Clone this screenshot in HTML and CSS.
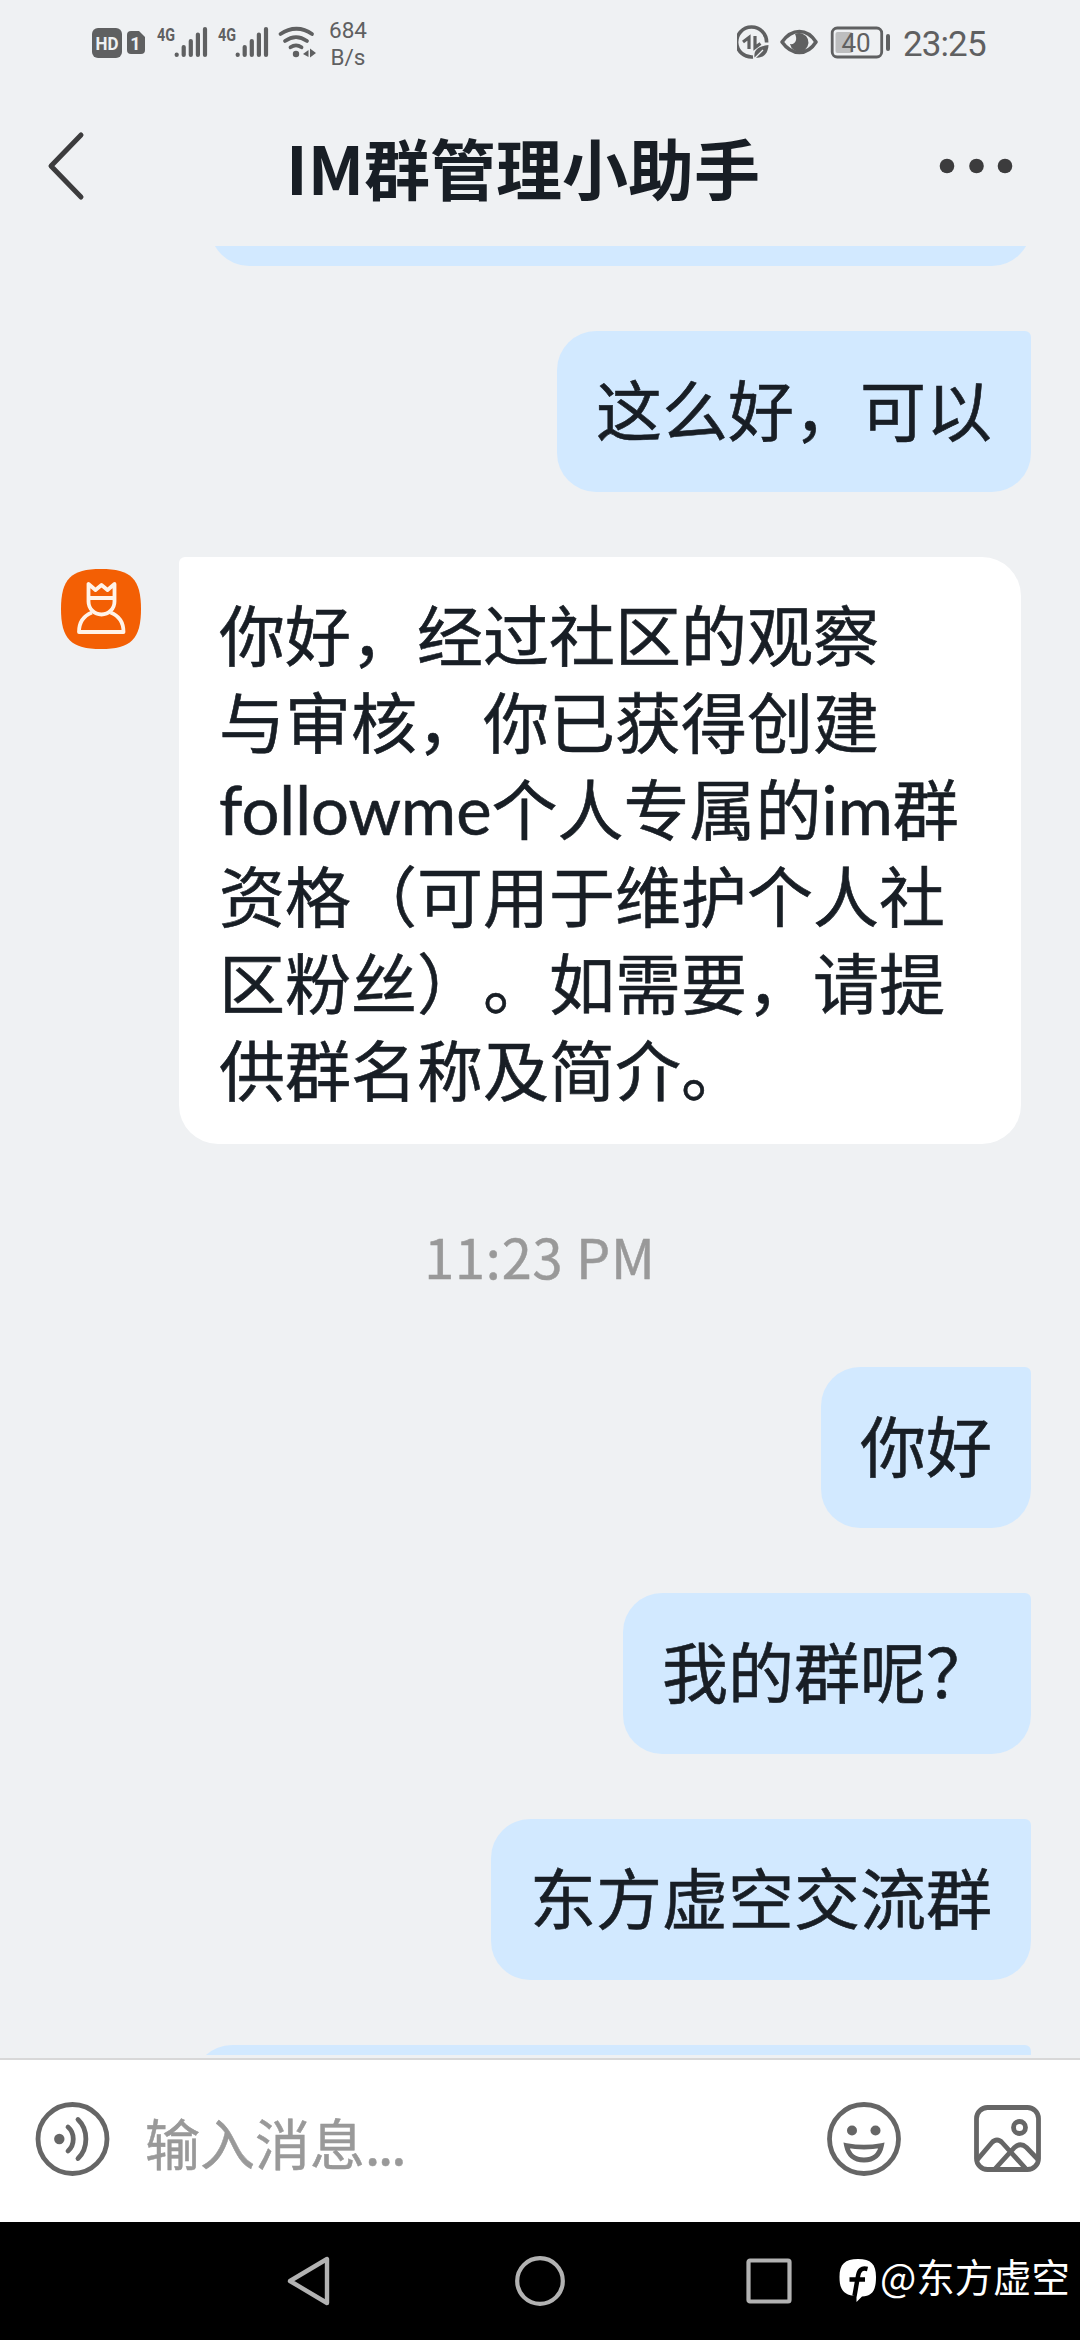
FILE: index.html
```html
<!DOCTYPE html>
<html lang="zh-CN">
<head>
<meta charset="utf-8">
<title>IM群管理小助手</title>
<link rel="stylesheet" href="styles.css">
</head>
<body>
<div class="screen">
  <div class="status">
    <svg class="status-left" width="230" height="90" viewBox="0 0 230 90">
      <rect x="2" y="28" width="30" height="30" rx="6" fill="#5f6061"/>
      <text x="17" y="50" class="hd" text-anchor="middle" textLength="23" lengthAdjust="spacingAndGlyphs">HD</text>
      <path d="M41 31h8l6 6v13a4 4 0 0 1-4 4H41a4 4 0 0 1-4-4V35a4 4 0 0 1 4-4z" fill="#5f6061"/>
      <text x="45.500" y="50" class="sim" text-anchor="middle">1</text>
      <g id="signal">
        <text x="67" y="40.500" class="net" textLength="18" lengthAdjust="spacingAndGlyphs">4G</text>
        <g stroke="#5f6061" stroke-width="4.200" stroke-linecap="round"><path d="M86.700 54.500v.5M93.700 47v8M100.800 41v14M107.900 34.500V55M115 29v26"/></g>
      </g>
      <use href="#signal" x="61"/>
      <g fill="none" stroke="#5f6061" stroke-width="3.800" stroke-linecap="round">
        <path d="M190.500 34c10-7 22-7 31.500 0M195 41c7-5 15-5 22 0M200.500 47.300c3.500-2.500 7.500-2.500 11 0"/>
      </g>
      <circle cx="206" cy="54" r="3.200" fill="#5f6061"/>
      <path d="M213 54l5.500-4v7zM226 53l-6-4.500v9z" fill="#5f6061"/>
    </svg>
    <div class="speed"><span>684</span><span>B/s</span></div>
    <svg class="status-right" width="160" height="90" viewBox="0 0 160 90">
      <path d="M16 57A15 15 0 1 1 29.600 42.500" fill="none" stroke="#5f6061" stroke-width="3.600"/>
      <path d="M6 42l6-4.500v11.500M18 36v11.500l5.500-4" fill="none" stroke="#5f6061" stroke-width="3.200"/>
      <path d="M17.500 57.500c-1-7 3-11 14-12.500C31 54 26 59 17.500 57.500z" fill="#5f6061"/>
      <path d="M17 59l9-9" stroke="#eff1f3" stroke-width="1.200"/>
      <path d="M45 42c10-14 25-14 34 0c-9 14-24 14-34 0z" fill="none" stroke="#5f6061" stroke-width="3.600" stroke-linejoin="round"/>
      <path d="M58 34a9.300 9.300 0 1 1-5 10c5 1 8-4 5-10z" fill="#5f6061"/>
      <rect x="98.500" y="32" width="17" height="21" rx="2" fill="#bdbebf"/>
      <rect x="95.200" y="28" width="49.500" height="29" rx="5" fill="none" stroke="#5f6061" stroke-width="2.800"/>
      <path d="M151 36v13" stroke="#5f6061" stroke-width="4" stroke-linecap="round"/>
      <text x="119" y="51.500" class="battery" text-anchor="middle">40</text>
    </svg>
    <div class="clock">23:25</div>
  </div>

  <div class="header">
    <svg width="40" height="72" viewBox="0 0 40 72"><path d="M35 5L5 36l30 31" fill="none" stroke="#3c3c3d" stroke-width="5" stroke-linecap="round" stroke-linejoin="round"/></svg>
    <div class="title">IM群管理小助手</div>
    <svg width="76" height="16" viewBox="0 0 76 16" fill="#3c3c3d"><circle cx="9" cy="8" r="7.300"/><circle cx="38.500" cy="8" r="7.300"/><circle cx="67" cy="8" r="7.300"/></svg>
  </div>

  <div class="chat">
    <div class="bubble mine clipped-top"></div>
    <div class="bubble mine">这么好，可以</div>
    <div class="incoming">
      <svg class="avatar" width="80" height="80" viewBox="0 0 80 80">
        <path d="M40 0C70 0 80 10 80 40S70 80 40 80S0 70 0 40S10 0 40 0z" fill="#f35f04"/>
        <g fill="none" stroke="#fff3e8" stroke-width="3.800" stroke-linejoin="round">
          <path d="M27.500 15v17.500a13 13 0 0 0 26 0V15l-7 6L40.500 16l-6 5zM27.500 29h26"/>
          <path d="M31 43.500C22 47 18 54 18 63h44.500c0-9-4-16-13-19.500"/>
        </g>
      </svg>
      <div class="bubble theirs">你好，经过社区的观察<br>与审核，你已获得创建<br><span class="latin">followme</span>个人专属的<span class="latin">im</span>群<br>资格（可用于维护个人社<br>区粉丝）。如需要，请提<br>供群名称及简介。</div>
    </div>
    <div class="time">11:23 PM</div>
    <div class="bubble mine">你好</div>
    <div class="bubble mine">我的群呢？</div>
    <div class="bubble mine">东方虚空交流群</div>
    <div class="bubble mine clipped-bottom"></div>
  </div>

  <div class="composer">
    <svg width="76" height="76" viewBox="0 0 76 76" fill="none" stroke="#666" stroke-width="4.800" stroke-linecap="round">
      <circle cx="38.500" cy="38" r="34.500"/><circle cx="25.300" cy="38" r="5.200" fill="#666" stroke="none"/>
      <path d="M34 26c7 6 7 18 0 24M44 18.500c10.500 10 10.500 29 0 39"/>
    </svg>
    <div class="placeholder">输入消息<span class="dots">...</span></div>
    <svg class="smile" width="76" height="76" viewBox="0 0 76 76" fill="none" stroke="#666" stroke-width="4.800">
      <circle cx="38" cy="38" r="34.500"/><circle cx="26" cy="29.500" r="5" fill="#666" stroke="none"/><circle cx="49.500" cy="29.500" r="5" fill="#666" stroke="none"/>
      <path d="M20.500 44.500c11 2 24 2 35 0C53.500 54.500 47 59 38 59s-15.500-4.500-17.500-14.500z"/>
    </svg>
    <svg width="70" height="70" viewBox="0 0 70 70" fill="none" stroke="#666" stroke-width="4.800">
      <rect x="3.500" y="3.500" width="62" height="62" rx="11"/>
      <circle cx="46.500" cy="23.500" r="6"/>
      <path d="M4.500 55.500L18.500 39q5.500-6 11 0L54 66M21 66L41.500 43.500q6-5.500 12 0L65 55.500"/>
    </svg>
  </div>

  <div class="nav">
    <svg width="46" height="54" viewBox="0 0 46 54"><path d="M4 27L41 5v44z" fill="none" stroke="#b2b2b2" stroke-width="4.400" stroke-linejoin="round"/></svg>
    <svg class="home" width="52" height="52" viewBox="0 0 52 52"><circle cx="26" cy="26" r="22.800" fill="none" stroke="#b2b2b2" stroke-width="4.200"/></svg>
    <svg class="recent" width="48" height="48" viewBox="0 0 48 48"><rect x="3.500" y="3.500" width="41" height="41" rx="1.500" fill="none" stroke="#b2b2b2" stroke-width="4.200"/></svg>
    <svg class="logo" width="38" height="44" viewBox="0 0 38 44">
      <path d="M19 0C32 0 37 5 37 18c0 14-4 19-14 19.500L17.500 43V37C5 36.500.5 31 .5 18S6 0 19 0z" fill="#fff"/>
      <path d="M28.500 10c-6-1.500-8.500 1-9.500 7L15.500 37M10.500 20.500h15.500" fill="none" stroke="#000" stroke-width="4.500"/>
    </svg>
    <div class="mark">@东方虚空</div>
  </div>
</div>
</body>
</html>
```
FILE: styles.css
```css
* { box-sizing: border-box; }
body {
  margin: 0;
  background: #eff1f3;
  font-family: "Noto Sans CJK SC", sans-serif;
  color: #181e25;
  text-spacing-trim: space-all;
}
svg { display: block; flex: none; }
.screen {
  width: 1080px;
  height: 2340px;
  display: flex;
  flex-direction: column;
  overflow: hidden;
}
.status {
  flex: none;
  display: flex;
  height: 90px;
  padding-left: 90px;
  color: #5f6061;
  font-family: Roboto, sans-serif;
}
.hd { font: 700 18px Roboto, sans-serif; fill: #eff1f3; }
.sim { font: 700 18px Roboto, sans-serif; fill: #eff1f3; }
.net { font: 700 19px Roboto, sans-serif; fill: #5f6061; }
.battery { font: 400 26px Roboto, sans-serif; fill: #5f6061; }
.speed {
  display: flex;
  flex-direction: column;
  width: 56px;
  padding-top: 17px;
  text-align: center;
  font-size: 22.5px;
  line-height: 27px;
}
.status-right { margin-left: 361px; }
.clock {
  margin-left: 6px;
  font-size: 35px;
  line-height: 89px;
  letter-spacing: -0.9px;
}
.header {
  flex: none;
  display: flex;
  align-items: center;
  height: 156px;
  padding: 0 66px 4px 46px;
}
.title {
  flex: 1;
  padding-left: 22px;
  text-align: center;
  font-size: 66px;
  line-height: 90px;
  font-weight: 700;
}
.header svg:first-child { margin-right: -2px; }
.header svg:last-child { margin-left: -2px; }
.chat {
  flex: none;
  display: flex;
  flex-direction: column;
  align-items: flex-end;
  gap: 65px;
  height: 1809px;
  margin-bottom: 3px;
  padding-right: 49px;
  overflow: hidden;
}
.bubble {
  flex: none;
  padding: 33px 39px 41px;
  border-radius: 39px;
  font-size: 66px;
  line-height: 87px;
  white-space: nowrap;
  -webkit-text-stroke: 0.6px currentColor;
}
.mine {
  background: #d2e9ff;
  border-top-right-radius: 6px;
}
.clipped-top {
  width: 821px;
  height: 161px;
  margin-top: -141px;
}
.clipped-bottom {
  width: 838px;
  height: 161px;
}
.incoming {
  flex: none;
  display: flex;
  width: 100%;
  padding-left: 61px;
  gap: 38px;
}
.avatar { margin-top: 12px; }
.theirs {
  width: 842px;
  height: 587px;
  padding-top: 32px;
  padding-left: 40px;
  background: #fff;
  border-top-left-radius: 6px;
}
.latin {
  font-family: Lato, sans-serif;
  font-size: 67px;
  line-height: 1;
}
.time {
  flex: none;
  width: 1080px;
  height: 93px;
  margin-right: -49px;
  text-align: center;
  font-size: 54px;
  line-height: 93px;
  letter-spacing: 0.8px;
  color: #999;
  -webkit-text-stroke: 0.5px currentColor;
}
.composer {
  flex: none;
  display: flex;
  align-items: center;
  height: 164px;
  padding: 0 37px 4px 34px;
  border-top: 2px solid #d8d8d8;
  background: #fff;
}
.placeholder {
  flex: 1;
  margin-left: 35px;
  padding-top: 4px;
  font-size: 55px;
  line-height: 80px;
  color: #999;
  -webkit-text-stroke: 0.5px currentColor;
}
.dots { letter-spacing: -2.2px; }
.smile { margin-right: 71px; }
.nav {
  flex: none;
  display: flex;
  align-items: center;
  height: 118px;
  padding-left: 286px;
  background: #000;
}
.home { margin-left: 182px; }
.recent { margin-left: 179px; }
.logo { margin-left: 46px; }
.mark {
  margin-left: 3px;
  padding-bottom: 12px;
  font-size: 38.4px;
  line-height: 56px;
  color: #fff;
}
```
